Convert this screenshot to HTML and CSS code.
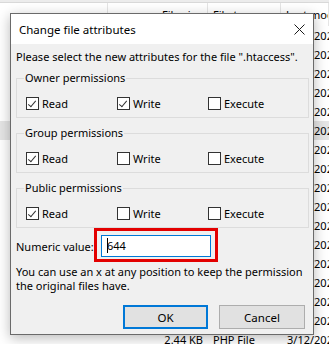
FILE: index.html
```html
<!DOCTYPE html>
<html lang="en">
<head>
    <meta charset="UTF-8">
    <meta name="viewport" content="width=device-width, initial-scale=1.0">
    <title>Change file attributes</title>
    <link rel="stylesheet" href="styles.css">
</head>
<body>

<div class="file-list">
    <div class="list-header">
        <div class="col col-name"></div>
        <div class="col col-size">File size</div>
        <div class="col col-type">File type</div>
        <div class="col col-date">Last modified</div>
    </div>
    <div class="list-rows">
        <div class="row"><div></div><div></div><div></div><div class="col-date">3/12/2023</div></div>
        <div class="row"><div></div><div></div><div></div><div class="col-date">3/12/2023</div></div>
        <div class="row"><div></div><div></div><div></div><div class="col-date">3/12/2023</div></div>
        <div class="row"><div></div><div></div><div></div><div class="col-date">3/12/2023</div></div>
        <div class="row"><div></div><div></div><div></div><div class="col-date">3/12/2023</div></div>
        <div class="row selected"><div></div><div></div><div></div><div class="col-date">3/12/2023</div></div>
        <div class="row"><div></div><div></div><div></div><div class="col-date">3/12/2023</div></div>
        <div class="row"><div></div><div></div><div></div><div class="col-date">3/12/2023</div></div>
        <div class="row"><div></div><div></div><div></div><div class="col-date">3/12/2023</div></div>
        <div class="row"><div></div><div></div><div></div><div class="col-date">3/12/2023</div></div>
        <div class="row"><div></div><div></div><div></div><div class="col-date">3/12/2023</div></div>
        <div class="row"><div></div><div></div><div></div><div class="col-date">3/12/2023</div></div>
        <div class="row"><div></div><div></div><div></div><div class="col-date">3/12/2023</div></div>
        <div class="row"><div></div><div></div><div></div><div class="col-date">3/12/2023</div></div>
        <div class="row"><div></div><div></div><div></div><div class="col-date">3/12/2023</div></div>
        <div class="row"><div></div><div></div><div></div><div class="col-date">3/12/2023</div></div>
        <div class="row"><div></div><div class="col-size">2.44 KB</div><div class="col-type">PHP File</div><div class="col-date">3/12/2023</div></div>
    </div>
</div>

<div class="dialog">
    <div class="dialog-title">
        <span>Change file attributes</span>
        <svg class="close-icon" width="11" height="11" viewBox="0 0 11 11">
            <path d="M0.5 0.5 L10.5 10.5 M10.5 0.5 L0.5 10.5" stroke="#1a1a1a" stroke-width="1" fill="none"/>
        </svg>
    </div>
    <div class="dialog-body">
        <p class="intro">Please select the new attributes for the file ".htaccess".</p>

        <fieldset class="perm-group">
            <legend>Owner permissions</legend>
            <div class="perm-row">
                <label class="check"><span class="box checked"></span>Read</label>
                <label class="check"><span class="box checked"></span>Write</label>
                <label class="check"><span class="box"></span>Execute</label>
            </div>
        </fieldset>

        <fieldset class="perm-group">
            <legend>Group permissions</legend>
            <div class="perm-row">
                <label class="check"><span class="box checked"></span>Read</label>
                <label class="check"><span class="box"></span>Write</label>
                <label class="check"><span class="box"></span>Execute</label>
            </div>
        </fieldset>

        <fieldset class="perm-group">
            <legend>Public permissions</legend>
            <div class="perm-row">
                <label class="check"><span class="box checked"></span>Read</label>
                <label class="check"><span class="box"></span>Write</label>
                <label class="check"><span class="box"></span>Execute</label>
            </div>
        </fieldset>

        <div class="numeric-row">
            <span class="numeric-label">Numeric value:</span>
            <div class="field-wrap">
                <div class="field"><span class="caret"></span>644</div>
                <div class="highlight"></div>
            </div>
        </div>

        <p class="hint">You can use an x at any position to keep the permission<br>the original files have.</p>

        <div class="buttons">
            <button class="btn btn-default">OK</button>
            <button class="btn">Cancel</button>
        </div>
    </div>
</div>

</body>
</html>
```

FILE: styles.css
```css
body {
    margin: 0;
    font-family: "Noto Sans", "Open Sans", sans-serif;
    font-size: 11px;
    color: #000;
    background: #fff;
    overflow: hidden;
    position: relative;
    height: 344px;
}

/* background file list */
.file-list {
    border-top: 2px solid #ececec;
}

.list-header {
    display: grid;
    grid-template-columns: 108px 100px 73px 1fr;
    height: 23px;
    border-top: 1px solid #d9d9d9;
    line-height: 23px;
}

.list-header .col {
    border-right: 1px solid #e5e5e5;
    padding: 0 5px;
    white-space: nowrap;
    overflow: hidden;
}

.list-header .col-size {
    text-align: right;
}

.list-rows .row {
    display: grid;
    grid-template-columns: 108px 100px 73px 1fr;
    height: 19px;
    line-height: 19px;
    white-space: nowrap;
}

.row.selected {
    background: #e5e5e5;
}

.row .col-size {
    text-align: right;
    padding-right: 5px;
}

.row .col-type {
    padding-left: 5px;
}

.row .col-date {
    padding-left: 6px;
}

/* dialog window */
.dialog {
    position: absolute;
    left: 10px;
    top: 13px;
    width: 304px;
    box-sizing: border-box;
    border: 1px solid #6a6a6a;
    background: #f0f0f0;
    box-shadow: 0 3px 12px rgba(0, 0, 0, 0.28);
}

.dialog-title {
    height: 30px;
    background: #fff;
    display: flex;
    align-items: center;
    justify-content: space-between;
    padding: 0 8px 0 8px;
}

.dialog-title span {
    font-size: 11.5px;
}

.close-icon {
    margin-top: 1px;
}

.dialog-body {
    padding: 5px 4px 5px 5px;
}

.intro {
    margin: 0;
    line-height: 16px;
    white-space: nowrap;
}

.perm-group {
    margin: 5px 0 0 0;
    padding: 9px 9px 6px 9px;
    border: 1px solid #dcdcdc;
}

.perm-group + .perm-group {
    margin-top: 7px;
}

.perm-group legend {
    padding: 0 1px;
    margin-left: -2px;
    line-height: 16px;
}

.perm-row {
    display: flex;
    height: 16px;
    align-items: center;
}

.check {
    width: 91px;
    display: flex;
    align-items: center;
    gap: 3px;
}

.box {
    width: 13px;
    height: 13px;
    box-sizing: border-box;
    border: 1px solid #333;
    background: #fff;
    position: relative;
}

.box.checked::after {
    content: "";
    position: absolute;
    left: 3px;
    top: 1px;
    width: 3px;
    height: 7px;
    border-right: 1px solid #333;
    border-bottom: 1px solid #333;
    transform: rotate(40deg);
    transform-origin: center;
}

.numeric-row {
    display: flex;
    align-items: center;
    margin-top: 7px;
    height: 22px;
}

.numeric-label {
    width: 85px;
    white-space: nowrap;
}

.field-wrap {
    position: relative;
}

.field {
    width: 110px;
    height: 22px;
    box-sizing: border-box;
    border: 1px solid #0078d7;
    background: #fff;
    padding-left: 5px;
    line-height: 20px;
}

.caret {
    display: inline-block;
    width: 1px;
    height: 15px;
    background: #000;
    vertical-align: -3px;
    margin-right: -1px;
}

.highlight {
    position: absolute;
    left: -7px;
    top: -7px;
    right: -7px;
    bottom: -5px;
    border: 3px solid #e30000;
}

.hint {
    margin: 8px 0 0 0;
    line-height: 14px;
    white-space: nowrap;
}

.buttons {
    display: flex;
    justify-content: flex-end;
    gap: 11px;
    margin-top: 12px;
    padding-right: 4px;
}

.btn {
    width: 86px;
    height: 24px;
    font-family: inherit;
    font-size: 11.5px;
    background: #e1e1e1;
    border: 1px solid #adadad;
    padding: 0;
    color: #000;
}

.btn-default {
    width: 85px;
    border: 2px solid #0078d7;
}
```
